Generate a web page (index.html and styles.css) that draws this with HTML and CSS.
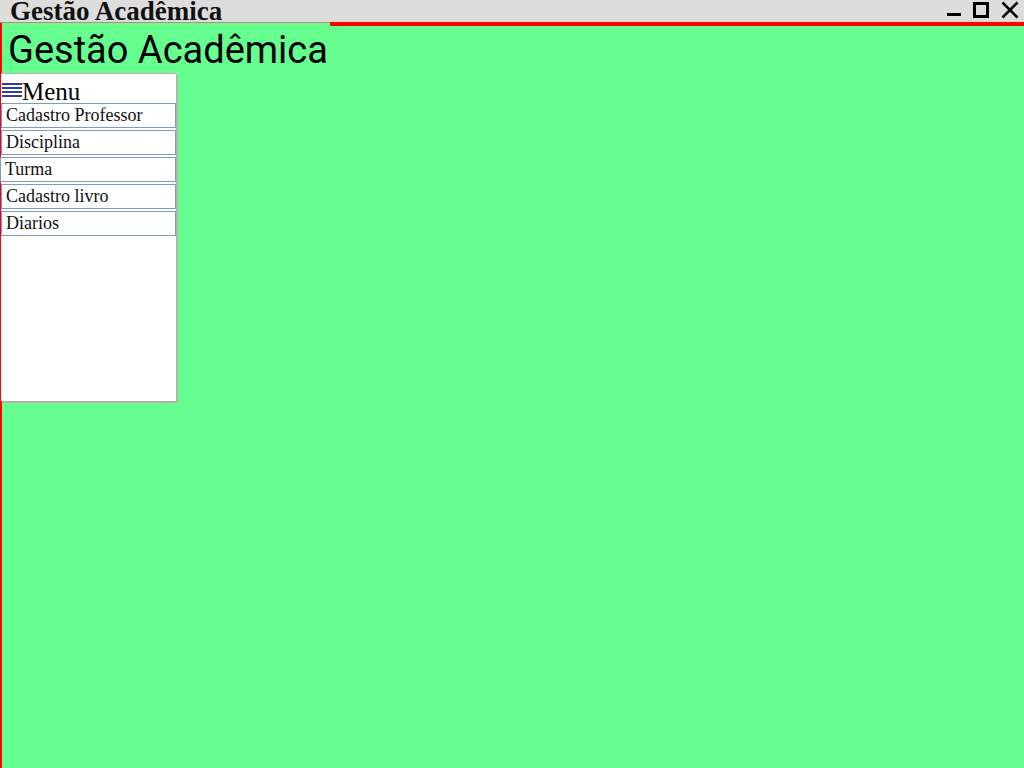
FILE: index.html
```html
<!DOCTYPE html>
<html lang="pt">
<head>
<meta charset="utf-8">
<title>Gestão Acadêmica</title>
<link rel="stylesheet" href="styles.css">
</head>
<body>
<div class="window">
  <div class="titlebar">
    <span class="title">Gestão Acadêmica</span>
    <div class="controls">
      <svg class="ctl" width="15" height="19" viewBox="0 0 15 19"><rect x="1" y="13" width="14" height="3" fill="#000"/></svg>
      <svg class="ctl" width="16" height="19" viewBox="0 0 16 19"><rect x="1.5" y="3.5" width="13" height="13" fill="none" stroke="#000" stroke-width="3"/></svg>
      <svg class="ctl" width="18" height="19" viewBox="0 0 18 19"><path d="M1.5 2.5 L16.5 17.5 M16.5 2.5 L1.5 17.5" stroke="#000" stroke-width="2.6" fill="none"/></svg>
    </div>
  </div>
  <div class="main">
    <div class="toprow">
      <h1 class="heading">Gestão Acadêmica</h1>
      <div class="topfill"></div>
    </div>
    <nav class="menu">
      <div class="menu-head">
        <svg class="burger" width="20" height="16" viewBox="0 0 20 16">
          <rect x="0" y="1" width="20" height="2" fill="#2b3f9a"/>
          <rect x="0" y="5" width="20" height="2" fill="#2b3f9a"/>
          <rect x="0" y="9" width="20" height="2" fill="#2b3f9a"/>
          <rect x="0" y="13" width="20" height="2" fill="#2b3f9a"/>
        </svg>
        <span class="menu-label">Menu</span>
      </div>
      <div class="item">Cadastro Professor</div>
      <div class="item">Disciplina</div>
      <div class="item item-shift">Turma</div>
      <div class="item">Cadastro livro</div>
      <div class="item">Diarios</div>
    </nav>
  </div>
</div>
</body>
</html>
```
FILE: styles.css
```css
html, body {
  margin: 0;
  padding: 0;
  height: 100%;
}
body {
  font-family: "Liberation Serif", "Times New Roman", serif;
  background: #66ff8f;
  overflow: hidden;
}
.window {
  display: flex;
  flex-direction: column;
  height: 768px;
}
.titlebar {
  height: 22px;
  background: #dddddd;
  display: flex;
  align-items: flex-start;
  justify-content: space-between;
  overflow: hidden;
}
.title {
  font-family: "Liberation Serif", serif;
  font-weight: bold;
  font-size: 27px;
  line-height: 22px;
  padding-left: 10px;
  color: #111;
}
.controls {
  display: flex;
  gap: 12px;
  padding-right: 5px;
  padding-top: 0;
}
.ctl { display: block; }
.main {
  flex: 1;
  border-left: 2px solid #ff0000;
  background: #66ff8f;
  display: flex;
  flex-direction: column;
  align-items: flex-start;
}
.toprow {
  display: flex;
  width: 100%;
  align-items: flex-start;
}
.heading {
  margin: 0 0 0 -2px;
  font-family: Roboto, "Noto Sans", sans-serif;
  font-weight: normal;
  font-size: 38px;
  line-height: 44px;
  padding: 5px 2px 1px 8px;
  border-top: 1px solid #c08878;
  color: #000;
  white-space: nowrap;
}
.topfill {
  flex: 1;
  border-top: 4px solid #ff0000;
}
.menu {
  width: 175px;
  height: 327px;
  background: #fff;
  border-top: 1px solid #b8b8b0;
  box-shadow: 2px 2px 0 #b4b4ac;
  margin-left: -1px;
  display: flex;
  flex-direction: column;
  gap: 2px;
}
.menu-head {
  display: flex;
  align-items: center;
  height: 27px;
  padding-left: 1px;
}
.burger {
  display: block;
  margin-top: 5px;
}
.menu-label {
  font-size: 25px;
  line-height: 27px;
  padding-top: 8px;
}
.item {
  font-size: 18px;
  line-height: 21px;
  padding: 1px 4px;
  border: 1px solid #7f9bc0;
  color: #111;
}
.item-shift {
  margin-left: -1px;
}
```
